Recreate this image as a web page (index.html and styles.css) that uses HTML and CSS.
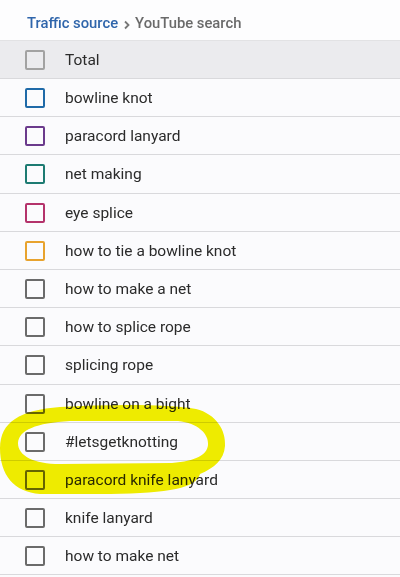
FILE: index.html
```html
<!DOCTYPE html>
<html>
<head>
<meta charset="utf-8">
<link rel="stylesheet" href="styles.css">
</head>
<body>
<div class="page">
  <div class="crumbs"><span class="crumb-link">Traffic source</span><svg class="chev" width="10" height="10" viewBox="0 0 10 10"><path d="M3 1.5 L6.5 5 L3 8.5" fill="none" stroke="#777" stroke-width="1.8"/></svg><span class="crumb-cur">YouTube search</span></div>
  <div class="list">
    <div class="row total"><span class="cb cb-total"></span><span class="label">Total</span></div>
    <div class="row"><span class="cb c-blue"></span><span class="label">bowline knot</span></div>
    <div class="row"><span class="cb c-purple"></span><span class="label">paracord lanyard</span></div>
    <div class="row"><span class="cb c-teal"></span><span class="label">net making</span></div>
    <div class="row"><span class="cb c-pink"></span><span class="label">eye splice</span></div>
    <div class="row"><span class="cb c-orange"></span><span class="label">how to tie a bowline knot</span></div>
    <div class="row"><span class="cb"></span><span class="label">how to make a net</span></div>
    <div class="row"><span class="cb"></span><span class="label">how to splice rope</span></div>
    <div class="row"><span class="cb"></span><span class="label">splicing rope</span></div>
    <div class="row"><span class="cb"></span><span class="label">bowline on a bight</span></div>
    <div class="row"><span class="cb"></span><span class="label">#letsgetknotting</span></div>
    <div class="row"><span class="cb"></span><span class="label">paracord knife lanyard</span></div>
    <div class="row"><span class="cb"></span><span class="label">knife lanyard</span></div>
    <div class="row"><span class="cb"></span><span class="label">how to make net</span></div>
  </div>
  <svg class="marker" width="400" height="577" viewBox="0 0 400 577">
    <path fill-rule="evenodd" fill="#f2ef00" d="M0 448 C0 422 20 410 60 407 C110 404 170 404 196 409 C216 414 226 430 225 446 C224 460 214 468 200 474 C196 488 170 493 110 494 L40 494 C14 492 0 475 0 448 Z M18 443 C19 430 36 423 70 421 L178 421 C198 423 209 434 208 445 C207 455 196 461 172 463 L60 464 C34 464 18 456 18 443 Z"/>
  </svg>
</div>
</body>
</html>
```
FILE: styles.css
```css
html, body {
  margin: 0;
  padding: 0;
}
body {
  background: #fbfbfd;
  font-family: Roboto, "Noto Sans", sans-serif;
  color: #2b2b2b;
}
.page {
  position: relative;
  width: 400px;
  height: 577px;
  overflow: hidden;
}
.crumbs {
  height: 40px;
  box-sizing: border-box;
  padding: 14px 0 0 27px;
  display: flex;
  align-items: baseline;
  font-size: 14.8px;
  font-weight: 500;
  background: #fdfdfe;
}
.crumb-link {
  color: #2f65ab;
}
.chev {
  margin: 0 3px 0 4px;
  align-self: center;
  position: relative;
  top: -2px;
}
.crumb-cur {
  color: #6a6a6a;
}
.list {
  display: flex;
  flex-direction: column;
}
.row {
  height: 38.2px;
  box-sizing: border-box;
  border-bottom: 1px solid #d9d9dc;
  display: flex;
  align-items: center;
  padding-left: 25px;
  padding-top: 1px;
}
.row.total {
  height: 39px;
  background: #ebebee;
  border-top: 1px solid #e2e2e4;
}
.cb {
  width: 20px;
  height: 20px;
  box-sizing: border-box;
  border: 2px solid #6b6b6b;
  border-radius: 2px;
  flex: none;
}
.cb-total {
  border-color: #a2a2a2;
}
.c-blue { border-color: #1f6aa8; }
.c-purple { border-color: #6b3a8c; }
.c-teal { border-color: #1d7b72; }
.c-pink { border-color: #b4326b; }
.c-orange { border-color: #e8a32e; }
.label {
  margin-left: 20px;
  font-size: 15.5px;
}
.marker {
  position: absolute;
  left: 0;
  top: 0;
  mix-blend-mode: multiply;
  pointer-events: none;
}
```
